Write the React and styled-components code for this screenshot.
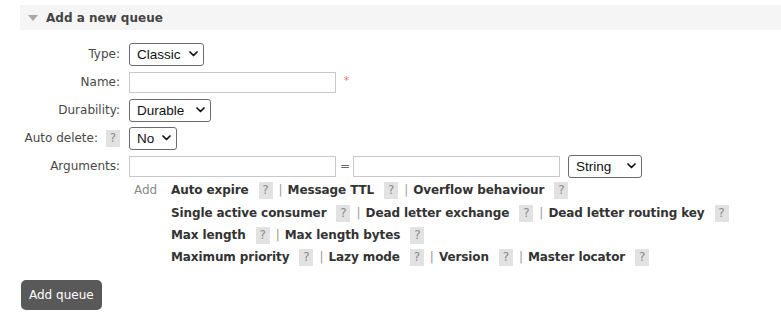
import React from 'react';
import styled, { createGlobalStyle } from 'styled-components';

const GlobalStyle = createGlobalStyle`
  body {
    margin: 0;
    background: #fff;
    font-family: "DejaVu Sans", Verdana, sans-serif;
    font-size: 12px;
    color: #484848;
  }
`;

const Page = styled.div`
  padding: 5px 0 0 20px;
`;

const SectionHeader = styled.div`
  display: flex;
  align-items: center;
  gap: 8px;
  height: 25px;
  padding-left: 8px;
  background: #f5f5f5;
  font-weight: bold;
  font-size: 12px;
  color: #444;
`;

const FormGrid = styled.div`
  display: grid;
  grid-template-columns: 100px auto;
  grid-template-rows: repeat(5, 28px) auto;
  column-gap: 9px;
  align-items: center;
  margin-top: 10px;
`;

const Label = styled.div`
  display: flex;
  justify-content: flex-end;
  align-items: center;
  gap: 8px;
  white-space: nowrap;
`;

const Control = styled.div`
  display: flex;
  align-items: center;
  gap: 8px;
`;

const TextInput = styled.input`
  box-sizing: border-box;
  width: 207px;
  height: 21px;
  border: 1px solid #c8c8c8;
  border-radius: 0;
  padding: 0 4px;
  font: inherit;
  outline: none;
`;

const Equals = styled.span`
  color: #666;
  margin: 0 -5px 0 -4px;
`;

const Required = styled.span`
  color: #f66;
  font-size: 10px;
  margin-top: -3px;
`;

const SelectWrap = styled.span`
  position: relative;
  display: inline-flex;
`;

const NativeSelect = styled.select`
  appearance: none;
  box-sizing: border-box;
  width: ${p => p.$width}px;
  height: 23px;
  padding: 0 20px 0 7px;
  border: 1px solid #6b6b6b;
  border-radius: 3px;
  background: #fff;
  font-family: "Liberation Sans", Arial, sans-serif;
  font-size: 13.5px;
  color: #111;
  outline: none;
`;

const Chevron = styled.svg`
  position: absolute;
  right: 6px;
  top: 8px;
  pointer-events: none;
`;

const Help = styled.span`
  display: inline-flex;
  align-items: center;
  justify-content: center;
  width: 14px;
  height: 17px;
  background: #e2e2e2;
  color: #8a8a8a;
  font-size: 12px;
  font-weight: normal;
`;

const OptionsRow = styled.div`
  grid-column: 2;
  display: flex;
  align-self: start;
  margin-top: -2px;
`;

const AddText = styled.span`
  width: 37px;
  padding-left: 5px;
  color: #8a8a8a;
  line-height: 24px;
`;

const OptionLines = styled.div`
  display: flex;
  flex-direction: column;
`;

const OptionLine = styled.div`
  display: flex;
  align-items: center;
  height: ${p => (p.$first ? 24 : 22)}px;
`;

const OptionName = styled.span`
  font-weight: bold;
  color: #333;
  letter-spacing: -0.1px;
  margin-right: 10px;
`;

const Sep = styled.span`
  color: #999;
  margin: 0 5px 0 6px;
`;

const SubmitButton = styled.button`
  margin: 12px 0 0 1px;
  height: 30px;
  padding: 0 8px;
  border: none;
  border-radius: 5px;
  background: #595959;
  color: #fff;
  font-family: "DejaVu Sans", Verdana, sans-serif;
  font-size: 12px;
`;

function Select({ value, options, width }) {
  return (
    <SelectWrap>
      <NativeSelect $width={width} defaultValue={value}>
        {options.map(o => (
          <option key={o}>{o}</option>
        ))}
      </NativeSelect>
      <Chevron width="9" height="6" viewBox="0 0 9 6">
        <path d="M1 1l3.5 3.5L8 1" fill="none" stroke="#111" strokeWidth="1.7" strokeLinecap="round" strokeLinejoin="round" />
      </Chevron>
    </SelectWrap>
  );
}

const optionLines = [
  ['Auto expire', 'Message TTL', 'Overflow behaviour'],
  ['Single active consumer', 'Dead letter exchange', 'Dead letter routing key'],
  ['Max length', 'Max length bytes'],
  ['Maximum priority', 'Lazy mode', 'Version', 'Master locator'],
];

export default function App() {
  return (
    <Page>
      <GlobalStyle />
      <SectionHeader>
        <svg width="10" height="6" viewBox="0 0 10 6">
          <path d="M0 0h10L5 6z" fill="#a8a8a8" />
        </svg>
        Add a new queue
      </SectionHeader>
      <FormGrid>
        <Label>Type:</Label>
        <Control>
          <Select value="Classic" options={['Classic', 'Quorum', 'Stream']} width={75} />
        </Control>

        <Label>Name:</Label>
        <Control>
          <TextInput />
          <Required>*</Required>
        </Control>

        <Label>Durability:</Label>
        <Control>
          <Select value="Durable" options={['Durable', 'Transient']} width={82} />
        </Control>

        <Label>
          Auto delete: <Help>?</Help>
        </Label>
        <Control>
          <Select value="No" options={['No', 'Yes']} width={48} />
        </Control>

        <Label>Arguments:</Label>
        <Control>
          <TextInput />
          <Equals>=</Equals>
          <TextInput />
          <Select value="String" options={['String', 'Number', 'List']} width={74} />
        </Control>

        <OptionsRow>
          <AddText>Add</AddText>
          <OptionLines>
            {optionLines.map((line, i) => (
              <OptionLine key={i} $first={i === 0}>
                {line.map((name, j) => (
                  <React.Fragment key={name}>
                    {j > 0 && <Sep>|</Sep>}
                    <OptionName>{name}</OptionName>
                    <Help>?</Help>
                  </React.Fragment>
                ))}
              </OptionLine>
            ))}
          </OptionLines>
        </OptionsRow>
      </FormGrid>
      <SubmitButton>Add queue</SubmitButton>
    </Page>
  );
}
